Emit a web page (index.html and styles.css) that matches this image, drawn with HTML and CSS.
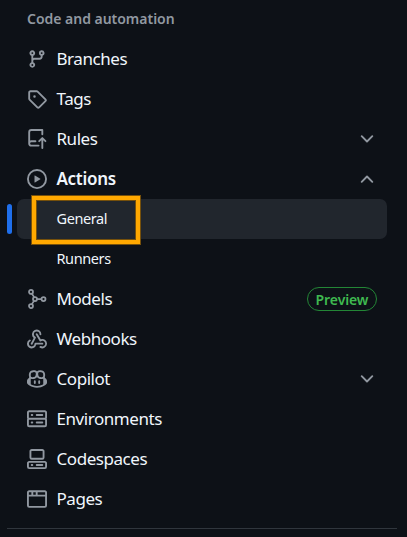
FILE: index.html
```html
<!DOCTYPE html>
<html lang="en">
<head>
<meta charset="utf-8">
<title>Settings</title>
<link rel="stylesheet" href="styles.css">
</head>
<body>
<nav class="sidebar">
  <h2 class="heading">Code and automation</h2>
  <ul class="list">
    <li class="item"><svg class="icon" viewBox="0 0 16 16"><path d="M9.5 3.25a2.25 2.25 0 1 1 3 2.122V6A2.5 2.5 0 0 1 10 8.5H6a1 1 0 0 0-1 1v1.128a2.251 2.251 0 1 1-1.5 0V5.372a2.25 2.25 0 1 1 1.5 0v1.836A2.493 2.493 0 0 1 6 7h4a1 1 0 0 0 1-1v-.628A2.25 2.25 0 0 1 9.5 3.25Zm-6 0a.75.75 0 1 0 1.5 0 .75.75 0 0 0-1.5 0Zm8.25-.75a.75.75 0 1 0 0 1.5.75.75 0 0 0 0-1.5ZM4.25 12a.75.75 0 1 0 0 1.5.75.75 0 0 0 0-1.5Z"/></svg><span class="label">Branches</span></li>
    <li class="item"><svg class="icon" viewBox="0 0 16 16"><path d="M1 7.775V2.75C1 1.784 1.784 1 2.75 1h5.025c.464 0 .91.184 1.238.513l6.25 6.25a1.75 1.75 0 0 1 0 2.474l-5.026 5.026a1.75 1.75 0 0 1-2.474 0l-6.25-6.25A1.752 1.752 0 0 1 1 7.775Zm1.5 0c0 .066.026.13.073.177l6.25 6.25a.25.25 0 0 0 .354 0l5.025-5.025a.25.25 0 0 0 0-.354l-6.25-6.25a.25.25 0 0 0-.177-.073H2.75a.25.25 0 0 0-.25.25ZM6 5a1 1 0 1 1 0 2 1 1 0 0 1 0-2Z"/></svg><span class="label">Tags</span></li>
    <li class="item"><svg class="icon" viewBox="0 0 16 16"><path d="M1 2.5A2.5 2.5 0 0 1 3.5 0h8.75a.75.75 0 0 1 .75.75v3.5a.75.75 0 0 1-1.5 0V1.5h-8a1 1 0 0 0-1 1v6.708A2.493 2.493 0 0 1 3.5 9h3.25a.75.75 0 0 1 0 1.5H3.5a1 1 0 0 0 0 2h5.75a.75.75 0 0 1 0 1.5H3.5A2.5 2.5 0 0 1 1 11.5Zm13.23 7.79h-.001l-1.224-1.224v6.184a.75.75 0 0 1-1.5 0V9.066L10.28 10.29a.75.75 0 0 1-1.06-1.061l2.505-2.504a.75.75 0 0 1 1.06 0L15.29 9.23a.751.751 0 0 1-.018 1.042.751.751 0 0 1-1.042.018Z"/></svg><span class="label">Rules</span><svg class="icon chevron" viewBox="0 0 16 16"><path d="m3.75 5.75 4.25 4.25 4.25-4.25"/></svg></li>
    <li class="item open"><svg class="icon" viewBox="0 0 16 16"><path d="M8 0a8 8 0 1 1 0 16A8 8 0 0 1 8 0ZM1.5 8a6.5 6.5 0 1 0 13 0 6.5 6.5 0 0 0-13 0Zm4.879-2.773 4.264 2.559a.25.25 0 0 1 0 .428l-4.264 2.559A.25.25 0 0 1 6 10.559V5.442a.25.25 0 0 1 .379-.215Z"/></svg><span class="label">Actions</span><svg class="icon chevron" viewBox="0 0 16 16"><path d="m3.75 10.25 4.25-4.25 4.25 4.25"/></svg></li>
    <li class="item sub current"><span class="label">General</span><span class="highlight"></span></li>
    <li class="item sub runners"><span class="label">Runners</span></li>
    <li class="item"><svg class="icon line" viewBox="0 0 16 16"><circle cx="3.2" cy="2.3" r="1.6"/><circle cx="3.2" cy="13.6" r="1.6"/><circle cx="6.4" cy="8" r="1.6"/><circle cx="13.2" cy="8" r="1.6"/><path d="M8 8h3.6M3.9 3.8l1.8 2.7M3.9 12.1l1.8-2.7"/></svg><span class="label">Models</span><span class="badge">Preview</span></li>
    <li class="item"><svg class="icon" viewBox="0 0 16 16"><path d="M5.5 4.25a2.25 2.25 0 0 1 4.5 0 .75.75 0 0 0 1.5 0 3.75 3.75 0 1 0-6.14 2.889l-2.272 4.258a.75.75 0 0 0 1.324.706L7 7.25a.75.75 0 0 0-.309-1.015A2.25 2.25 0 0 1 5.5 4.25Z"/><path d="M7.364 3.607a.75.75 0 0 1 1.03.257l2.608 4.349a3.75 3.75 0 1 1-.628 6.785.75.75 0 0 1 .752-1.299 2.25 2.25 0 1 0-.033-3.88.75.75 0 0 1-1.03-.256L7.107 4.636a.75.75 0 0 1 .257-1.03Z"/><path d="M2.9 8.776A.75.75 0 0 1 2.625 9.8 2.25 2.25 0 1 0 6 11.75a.75.75 0 0 1 .75-.751h5.5a.75.75 0 0 1 0 1.5H7.425a3.751 3.751 0 1 1-5.55-3.998.75.75 0 0 1 1.024.274Z"/></svg><span class="label">Webhooks</span></li>
    <li class="item"><svg class="icon" viewBox="0 0 16 16"><path d="M7.998 15.035c-4.562 0-7.873-2.914-7.998-3.749V9.338c.085-.628.677-1.686 1.588-2.065.013-.07.024-.143.036-.218.029-.183.06-.384.126-.612-.201-.508-.254-1.084-.254-1.656 0-.87.128-1.769.693-2.484.579-.733 1.494-1.124 2.724-1.261 1.206-.134 2.262.034 2.944.765.05.053.096.108.139.165.044-.057.094-.112.143-.165.682-.731 1.738-.899 2.944-.765 1.23.137 2.145.528 2.724 1.261.566.715.693 1.614.693 2.484 0 .572-.053 1.148-.254 1.656.066.228.098.429.126.612.012.076.024.148.037.218.924.385 1.522 1.471 1.591 2.095v1.872c0 .766-3.351 3.795-8.002 3.795Zm0-1.485c2.28 0 4.584-1.11 5.002-1.433V7.862l-.023-.116c-.49.21-1.075.291-1.727.291-1.146 0-2.059-.327-2.71-.991A3.222 3.222 0 0 1 8 6.303a3.24 3.24 0 0 1-.544.743c-.65.664-1.563.991-2.71.991-.652 0-1.236-.081-1.727-.291l-.023.116v4.255c.419.323 2.722 1.433 5.002 1.433ZM6.762 2.83c-.193-.206-.637-.413-1.682-.297-1.019.113-1.479.404-1.713.7-.247.312-.369.789-.369 1.554 0 .793.129 1.171.308 1.371.162.181.519.379 1.442.379.853 0 1.339-.235 1.638-.54.315-.322.527-.827.617-1.553.117-.935-.037-1.395-.241-1.614Zm4.155-.297c-1.044-.116-1.488.091-1.681.297-.204.219-.359.679-.242 1.614.091.726.303 1.231.618 1.553.299.305.784.54 1.638.54.922 0 1.28-.198 1.442-.379.179-.2.308-.578.308-1.371 0-.765-.123-1.242-.37-1.554-.233-.296-.693-.587-1.713-.7Z"/><path d="M6.25 9.037a.75.75 0 0 1 .75.75v1.501a.75.75 0 0 1-1.5 0V9.787a.75.75 0 0 1 .75-.75Zm4.25.75v1.501a.75.75 0 0 1-1.5 0V9.787a.75.75 0 0 1 1.5 0Z"/></svg><span class="label">Copilot</span><svg class="icon chevron" viewBox="0 0 16 16"><path d="m3.75 5.75 4.25 4.25 4.25-4.25"/></svg></li>
    <li class="item"><svg class="icon" viewBox="0 0 16 16"><path d="M1.75 1h12.5c.966 0 1.75.784 1.75 1.75v4c0 .372-.116.717-.314 1 .198.283.314.628.314 1v4a1.75 1.75 0 0 1-1.75 1.75H1.75A1.75 1.75 0 0 1 0 12.75v-4c0-.358.109-.707.314-1a1.739 1.739 0 0 1-.314-1v-4C0 1.784.784 1 1.75 1ZM1.5 2.75v4c0 .138.112.25.25.25h12.5a.25.25 0 0 0 .25-.25v-4a.25.25 0 0 0-.25-.25H1.75a.25.25 0 0 0-.25.25Zm.25 5.75a.25.25 0 0 0-.25.25v4c0 .138.112.25.25.25h12.5a.25.25 0 0 0 .25-.25v-4a.25.25 0 0 0-.25-.25ZM7 4.75A.75.75 0 0 1 7.75 4h4.5a.75.75 0 0 1 0 1.5h-4.5A.75.75 0 0 1 7 4.75ZM7.75 10h4.5a.75.75 0 0 1 0 1.5h-4.5a.75.75 0 0 1 0-1.5ZM3 4.75A.75.75 0 0 1 3.75 4h.5a.75.75 0 0 1 0 1.5h-.5A.75.75 0 0 1 3 4.75ZM3.75 10h.5a.75.75 0 0 1 0 1.5h-.5a.75.75 0 0 1 0-1.5Z"/></svg><span class="label">Environments</span></li>
    <li class="item"><svg class="icon" viewBox="0 0 16 16"><path d="M0 11.25c0-.966.784-1.75 1.75-1.75h12.5c.966 0 1.75.784 1.75 1.75v3A1.75 1.75 0 0 1 14.25 16H1.75A1.75 1.75 0 0 1 0 14.25Zm2-9.5C2 .784 2.784 0 3.75 0h8.5C13.216 0 14 .784 14 1.75v5a1.75 1.75 0 0 1-1.75 1.75h-8.5A1.75 1.75 0 0 1 2 6.75Zm1.75-.25a.25.25 0 0 0-.25.25v5c0 .138.112.25.25.25h8.5a.25.25 0 0 0 .25-.25v-5a.25.25 0 0 0-.25-.25Zm-2 9.5a.25.25 0 0 0-.25.25v3c0 .138.112.25.25.25h12.5a.25.25 0 0 0 .25-.25v-3a.25.25 0 0 0-.25-.25Z"/><path d="M7 12.75a.75.75 0 0 1 .75-.75h4.5a.75.75 0 0 1 0 1.5h-4.5a.75.75 0 0 1-.75-.75Zm-4 0a.75.75 0 0 1 .75-.75h.5a.75.75 0 0 1 0 1.5h-.5a.75.75 0 0 1-.75-.75Z"/></svg><span class="label">Codespaces</span></li>
    <li class="item"><svg class="icon" viewBox="0 0 16 16"><path d="M0 2.75C0 1.784.784 1 1.75 1h12.5c.966 0 1.75.784 1.75 1.75v10.5A1.75 1.75 0 0 1 14.25 15H1.75A1.75 1.75 0 0 1 0 13.25ZM14.5 6h-13v7.25c0 .138.112.25.25.25h12.5a.25.25 0 0 0 .25-.25Zm-6-3.5v2h6V2.75a.25.25 0 0 0-.25-.25ZM5 2.5v2h2v-2Zm-3.25 0a.25.25 0 0 0-.25.25V4.5h2v-2Z"/></svg><span class="label">Pages</span></li>
  </ul>
</nav>
</body>
</html>
```

FILE: styles.css
```css
* { box-sizing: border-box; }
body {
  margin: 0;
  height: 537px;
  overflow: hidden;
  background: #0d1117;
  color: #f0f6fc;
  font-family: "Noto Sans", "Open Sans", sans-serif;
}
.sidebar {
  margin: 0 10px 0 7px;
  height: 529px;
  border-bottom: 1px solid #30363d;
}
.heading {
  margin: 0;
  padding: 0 20px;
  height: 39px;
  font-size: 14px;
  font-weight: 600;
  line-height: 37px;
  letter-spacing: -0.02px;
  color: #9198a1;
}
.list {
  margin: 0;
  padding: 0 10px;
  list-style: none;
}
.item {
  position: relative;
  display: flex;
  align-items: center;
  height: 40px;
  padding: 0 10px;
  border-radius: 7px;
  font-size: 17px;
  letter-spacing: -0.45px;
}
.icon {
  width: 20px;
  height: 20px;
  flex: none;
  fill: #9198a1;
}
.line, .chevron {
  fill: none;
  stroke: #9198a1;
  stroke-width: 1.4;
}
.chevron {
  stroke-width: 1.5;
  stroke-linecap: round;
  stroke-linejoin: round;
}
.label {
  flex: 1;
  margin-left: 9.5px;
  line-height: 24px;
}
.open {
  font-weight: 600;
  letter-spacing: -0.3px;
}
.sub {
  padding-left: 30px;
  padding-bottom: 2px;
  font-size: 14.5px;
  letter-spacing: -0.4px;
}
.current { background: #21262d; }
.current::before {
  content: "";
  position: absolute;
  left: -10px;
  top: 5px;
  width: 5px;
  height: 30px;
  border-radius: 3px;
  background: #1f6feb;
}
.highlight {
  position: absolute;
  left: 14px;
  top: -4px;
  width: 110px;
  height: 50px;
  border: 6px solid #ffa800;
  outline: 1px solid #76500b;
  outline-offset: -1px;
}
.highlight::before {
  content: "";
  position: absolute;
  inset: -1px;
  border: 1px solid #76500b;
}
.badge {
  width: 70px;
  height: 24px;
  border: 1px solid #238636;
  border-radius: 12px;
  font-size: 14px;
  font-weight: 600;
  line-height: 23px;
  letter-spacing: -0.1px;
  text-align: center;
  color: #3fb950;
}
```
